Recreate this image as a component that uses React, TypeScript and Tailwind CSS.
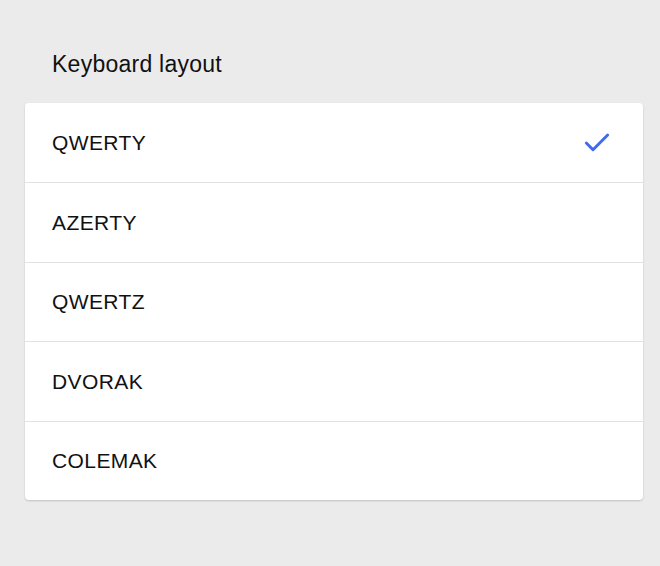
import { Check } from "lucide-react";

const layouts = ["QWERTY", "AZERTY", "QWERTZ", "DVORAK", "COLEMAK"];

export default function App() {
  const selected = "QWERTY";
  return (
    <div className="min-h-[566px] w-full bg-[#ebebeb] pl-[25px] pr-[17px] pt-[52px] font-['Liberation_Sans',Arial,sans-serif] text-[#111]">
      <h2 className="pl-[27px] text-[23px] leading-6 tracking-[0.25px] mb-[27px]">Keyboard layout</h2>
      <div className="rounded-[4px] bg-white shadow-[0_1px_2px_rgba(0,0,0,0.18)]">
        {layouts.map((name, i) => (
          <div
            key={name}
            className={
              "flex h-[79.4px] items-center justify-between pl-[27px] pr-[30px] " +
              (i > 0 ? "border-t border-[#e2e2e2]" : "")
            }
          >
            <span className="text-[21px] tracking-[0.4px]">{name}</span>
            {name === selected && <Check className="h-8 w-8 text-[#4169ec]" strokeWidth={2.2} />}
          </div>
        ))}
      </div>
    </div>
  );
}
